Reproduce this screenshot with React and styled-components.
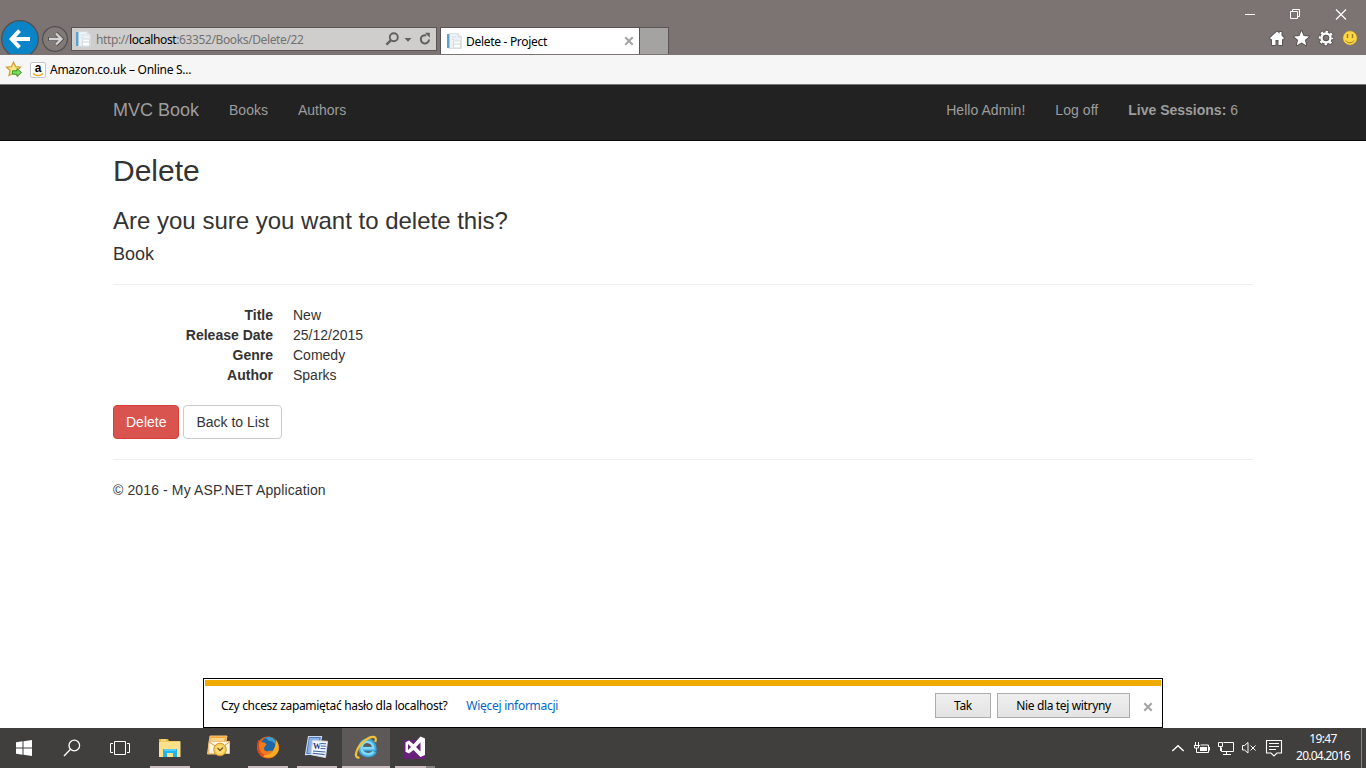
import React from "react";
import styled, { createGlobalStyle } from "styled-components";

const GlobalStyle = createGlobalStyle`
  * { box-sizing: border-box; }
  body { margin: 0; overflow: hidden; background: #fff; }
`;

const Screen = styled.div`
  width: 1366px;
  height: 768px;
  display: flex;
  flex-direction: column;
  overflow: hidden;
  background: #fff;
  font-family: "Liberation Sans", Arial, sans-serif;
`;

const UiText = styled.span`
  font-family: "Noto Sans", "Open Sans", sans-serif;
  font-size: 12px;
  line-height: 16px;
  letter-spacing: ${(p) => p.$spacing || 0}px;
  color: ${(p) => p.$color || "#000"};
  white-space: nowrap;
`;

/* Browser frame */
const Chrome = styled.header`
  height: 55px;
  flex: none;
  display: flex;
  background: #7b7473;
`;
const NavButtons = styled.svg`
  width: 71px;
  height: 36px;
  margin-top: 19px;
  flex: none;
`;
const AddressBar = styled.div`
  width: 366px;
  height: 24px;
  margin-top: 27px;
  padding: 0 3px;
  border: 1px solid #5a5554;
  background: #d0cecd;
  display: flex;
  align-items: center;
`;
const Address = styled.div`
  flex: 1;
  padding: 2px 0 0 5px;
  display: flex;
`;
const Tab = styled.div`
  width: 200px;
  height: 28px;
  margin: 27px 0 0 3px;
  padding: 0 5px 0 5px;
  border: 1px solid #5a5554;
  border-bottom-color: #7b7473;
  background: #fff;
  display: flex;
  align-items: center;
`;
const TabTitle = styled.div`
  flex: 1;
  padding: 2px 0 0 4px;
  display: flex;
`;
const NewTab = styled.div`
  width: 29px;
  height: 27px;
  margin-top: 27px;
  border: 1px solid #5a5554;
  border-width: 1px 1px 0 0;
  background: #a5a3a1;
`;
const FrameTools = styled.div`
  margin-left: auto;
  width: 146px;
  display: flex;
  flex-direction: column;
`;
const FavoritesBar = styled.div`
  height: 30px;
  flex: none;
  padding-left: 5px;
  display: flex;
  align-items: center;
  background: #f6f6f6;
  border-bottom: 1px solid #777;
`;
const FavoriteLink = styled.div`
  display: flex;
  align-items: center;
  gap: 4px;
  margin-left: 8px;
`;

/* Web page */
const Navbar = styled.nav`
  height: 56px;
  flex: none;
  display: flex;
  align-items: flex-start;
  padding: 15px 128px 0 113px;
  background: #222;
  border-bottom: 1px solid #080808;
  color: #9d9d9d;
  font-size: 14px;
  line-height: 20px;
`;
const Brand = styled.span`
  font-size: 18px;
  margin-right: 30px;
`;
const NavLinks = styled.div`
  display: flex;
  gap: 30px;
  margin-left: ${(p) => (p.$right ? "auto" : 0)};
`;
const Greeting = styled.span`
  letter-spacing: 0.05px;
`;
const Page = styled.main`
  width: 1140px;
  margin-left: 113px;
  color: #333;
  font-size: 14px;
  line-height: 20px;
`;
const Title = styled.h2`
  margin: 13px 0 10px;
  font-size: 30px;
  line-height: 33px;
  font-weight: 400;
`;
const Question = styled.h3`
  margin: 21px 0 10px;
  font-size: 24px;
  line-height: 26px;
  font-weight: 400;
`;
const Subject = styled.h4`
  margin: 10px 0;
  font-size: 18px;
  line-height: 20px;
  font-weight: 400;
`;
const Rule = styled.hr`
  margin: 20px 0;
  border: 0;
  border-top: 1px solid #eee;
`;
const Details = styled.dl`
  display: grid;
  grid-template-columns: 160px 1fr;
  column-gap: 20px;
  margin: 0 0 20px;
`;
const Term = styled.dt`
  font-weight: 700;
  text-align: right;
`;
const Value = styled.dd`
  margin: 0;
`;
const Actions = styled.div`
  display: flex;
  gap: 4px;
`;
const Button = styled.button`
  height: 34px;
  padding: 0 12px;
  font: inherit;
  border-radius: 4px;
  border: 1px solid ${(p) => (p.$danger ? "#d43f3a" : "#ccc")};
  background: ${(p) => (p.$danger ? "#d9534f" : "#fff")};
  color: ${(p) => (p.$danger ? "#fff" : "#333")};
`;
const Copyright = styled.p`
  margin: 0;
  letter-spacing: 0.12px;
`;

/* Password prompt */
const Prompt = styled.section`
  width: 960px;
  height: 50px;
  margin: auto 0 0 203px;
  padding: 1px;
  flex: none;
  border: 1px solid #000;
  background: #fff;
`;
const PromptStripe = styled.div`
  height: 6px;
  background: #f0ab00;
`;
const PromptRow = styled.div`
  height: 39px;
  padding: 0 8px 0 16px;
  display: flex;
  align-items: center;
`;
const PromptLink = styled.div`
  flex: 1;
  margin-left: 19px;
  display: flex;
`;
const PromptButton = styled.button`
  width: ${(p) => p.$width}px;
  height: 25px;
  margin-right: 6px;
  padding: 0;
  border: 1px solid #acacac;
  background: linear-gradient(#efefef, #e3e3e3);
`;
const PromptClose = styled.div`
  display: flex;
  padding: 2px 0 0 7px;
`;

/* Taskbar */
const Taskbar = styled.footer`
  height: 40px;
  flex: none;
  display: flex;
  background: #403f3e;
`;
const Task = styled.div`
  width: 48px;
  height: 40px;
  margin-left: ${(p) => p.$gap || 0}px;
  display: flex;
  flex-direction: column;
  align-items: center;
  background: ${(p) => (p.$active ? "#5d5959" : "transparent")};
`;
const TaskIcon = styled.svg`
  width: 48px;
  height: 38px;
  flex: none;
`;
const Running = styled.div`
  width: ${(p) => p.$width || 40}px;
  height: 2px;
  background: #c9bcbd;
  border-right: ${(p) => (p.$stacked ? "9px solid #858081" : "0")};
`;
const Tray = styled.div`
  margin-left: auto;
  display: flex;
`;
const Clock = styled.div`
  width: 76px;
  padding: 3px 0 0;
  display: flex;
  flex-direction: column;
  align-items: center;
  gap: 1px;
`;
const ShowDesktop = styled.div`
  width: 5px;
  border-left: 1px solid #858381;
`;

const PageIcon = () => (
  <svg width="16" height="16" viewBox="0 0 16 16">
    <path d="M3 .5h9l3.500 3.500V15.500H3z" fill="#edf1f5" stroke="#cfd6dc" strokeWidth=".7" />
    <path d="M1 1h3v14H1z" fill="#5d9fd0" />
    <path d="M3 1h1v14H3z" fill="#a5cbe8" />
    <path d="M12 .5V4h3.500M6 4h4M6 6.500h2" fill="none" stroke="#d3dce5" />
    <path d="M7.500 8h7v7h-7z" fill="#fff" stroke="#d3d9df" />
    <path d="M8 11h6" stroke="#cbd3da" />
  </svg>
);

const AddressTools = () => (
  <svg width="48" height="20" viewBox="0 0 48 20" fill="none" stroke="#626160">
    <circle cx="8.800" cy="8.300" r="4" strokeWidth="1.900" />
    <path d="M5.800 11.300 1.400 15.700" strokeWidth="2.400" />
    <path d="M19.500 9h7L23 12.700z" fill="#626160" stroke="none" />
    <path d="M41.300 6.500A4.100 4.100 0 1 0 44 10.500" strokeWidth="2" />
    <path d="M40 3.700h4.800v5z" fill="#626160" stroke="none" />
  </svg>
);

const Close = () => (
  <svg width="10" height="10" viewBox="0 0 10 10">
    <path d="M1.300 1.300l7.400 7.400M8.700 1.300l-7.400 7.400" stroke="#a4a4a4" strokeWidth="2.100" />
  </svg>
);

const ToolbarIcons = () => (
  <svg width="146" height="55" viewBox="0 0 146 55">
    <g fill="none" stroke="#fff">
      <path d="M25 14.500h10M70.500 11.500h7v7h-7zM72.500 11.500v-2h7v7h-2" />
      <path d="M116 9.500l10 10M126 9.500l-10 10" strokeWidth="1.200" />
    </g>
    <g stroke="#5b5554" strokeWidth="2" strokeLinejoin="round" fill="#fff" paintOrder="stroke">
      <path d="M57 31.500l2.500 2.300V32h2v3.500L64 38l-1 1.500-1-.8V45h-3.500v-5h-3v5H52v-6.300l-1 .8-1-1.500z" />
      <path d="M81.500 31l2.100 4.900 5.400.5-4.100 3.500 1.300 5.300-4.700-2.800-4.700 2.800 1.300-5.300-4.100-3.500 5.400-.5z" />
    </g>
    <g fill="none">
      <circle cx="106" cy="38" r="4.600" stroke="#5b5554" strokeWidth="4.500" />
      <circle cx="106" cy="38" r="6.500" stroke="#5b5554" strokeWidth="3.500" strokeDasharray="3.400 1.705" strokeDashoffset="1.700" />
      <circle cx="106" cy="38" r="4.500" stroke="#fff" strokeWidth="2.400" />
      <circle cx="106" cy="38" r="6.300" stroke="#fff" strokeWidth="2" strokeDasharray="2.400 2.548" strokeDashoffset="1.200" />
    </g>
    <circle cx="130" cy="38" r="7.200" fill="#ffd843" stroke="#8f7a45" strokeWidth=".6" />
    <path d="M127.500 34v4M132.500 34v4" stroke="#a27a20" strokeWidth="1.500" />
    <path d="M125.800 40.500c2 3 6.400 3 8.400 0" fill="none" stroke="#a27a20" />
  </svg>
);

const BackForward = () => (
  <NavButtons viewBox="0 19 71 36">
    <circle cx="20" cy="39" r="18.300" fill="#0a84c6" stroke="#574f4c" strokeWidth="1.300" />
    <path d="M30 39H12.500M19.500 30.700L11.700 39l7.800 8.300" fill="none" stroke="#fff" strokeWidth="3.900" />
    <circle cx="55" cy="39" r="12.400" fill="#817a79" stroke="#545150" strokeWidth="1.300" />
    <path d="M48 39h12M56 33.200L61.700 39 56 44.800" fill="none" stroke="#555" strokeWidth="4" />
    <path d="M49 39h12M56 33.500L61.500 39 56 44.500" fill="none" stroke="#d6d4d3" strokeWidth="2.300" />
    <path d="M0 54h71v1H0z" fill="#7b7473" />
  </NavButtons>
);

const AddFavorite = () => (
  <svg width="17" height="17" viewBox="0 0 17 17">
    <path d="M8.500 1.200l2.100 4.500 5 .5-3.800 3.300 1.200 5-4.500-2.200L4 14.500l1.200-5L1.400 6.200l5-.5z" fill="#ffe78a" stroke="#d39a2c" strokeWidth="1.200" />
    <path d="M7.500 9.800H12V7.500l4.500 4L12 15.500v-2.300H7.500z" fill="#7ddb5f" stroke="#2f9a25" />
  </svg>
);

const AmazonTile = styled.div`
  width: 16px;
  height: 16px;
  border: 1px solid #c4c4c4;
  border-radius: 2px;
  background: #fff;
  display: grid;
  justify-items: center;
  overflow: hidden;
  font: 700 12px/10px "Liberation Sans", Arial, sans-serif;
`;
const Amazon = () => (
  <AmazonTile>
    <span>a</span>
    <svg width="12" height="4" viewBox="0 0 12 4">
      <path d="M1 .5c3 2.700 7 2.700 10 0" fill="none" stroke="#f5a51b" strokeWidth="1.500" />
    </svg>
  </AmazonTile>
);

const WindowsIcon = () => (
  <TaskIcon>
    <path d="M16 14.200l6.500-.9v6.200H16zM23.500 13.200L32 12v7.500h-8.500zM16 20.500h6.500v6.200l-6.500-.9zM23.500 20.500H32V28l-8.500-1.200z" fill="#fff" />
  </TaskIcon>
);
const SearchIcon = () => (
  <TaskIcon fill="none" stroke="#fff" strokeWidth="1.300">
    <circle cx="26.300" cy="17.500" r="5.300" />
    <path d="M22.500 21.300L16 28" />
  </TaskIcon>
);
const TaskViewIcon = () => (
  <TaskIcon fill="none" stroke="#fff">
    <path d="M18.500 13.500h11v13h-11zM17 15.500h-2.500v9H17M31 15.500h2.500v9H31" />
  </TaskIcon>
);
const ExplorerIcon = () => (
  <TaskIcon>
    <path d="M13 11h9l1 2h11v16H13z" fill="#e9b53a" />
    <path d="M14 13.500h20.500V29H13V15z" fill="#ffe08a" />
    <path d="M15 12h5" stroke="#fff6c4" />
    <path d="M17 29v-8h14v8h-4v-4h-6v4z" fill="#1fb6f0" />
    <path d="M18 21h12v2H18z" fill="#53cdf5" />
  </TaskIcon>
);
const OutlookIcon = () => (
  <TaskIcon>
    <path d="M15 8h17l-1 5-3 13H12.500z" fill="#f3a93d" stroke="#f9c777" />
    <path d="M16 10h14l-1 3H15z" fill="#fbd48c" />
    <path d="M14 13.500h20.500v12H14z" fill="#fff6e6" stroke="#f2c27c" />
    <path d="M14 14l11 7 9.500-7" fill="none" stroke="#d99a3e" />
    <circle cx="25" cy="21.500" r="6.300" fill="#f7cd5a" stroke="#d8942a" />
    <circle cx="25" cy="21.500" r="4.200" fill="#fddf7b" />
    <path d="M22.500 20l2.500 2.500 3-3" fill="none" stroke="#7e5a1a" strokeWidth="1.500" />
  </TaskIcon>
);
const FirefoxIcon = () => (
  <TaskIcon>
    <circle cx="24" cy="19.500" r="10.900" fill="#e8641b" />
    <circle cx="25" cy="16.500" r="7.800" fill="#1f66a5" />
    <path d="M21 10c6-3 11 1 11 7-2-2-3-4-6-4-2 0-2-2-5-3z" fill="#3f9fd2" />
    <path d="M14.500 12l3 2.500c3-1 4 .5 5 2l-2 2.500c-1.500 3 1 5 4 4 2-.5 3 0 4 0-2 4-7 5-10 2-4 0-6-5-4-13z" fill="#f07c1e" />
    <path d="M32 12c4.500 6 3.500 13-2 16.200-5 2.800-10.500 1-13-1.700 7 3 14.500-2 15-14.500z" fill="#fbab22" />
    <path d="M14.800 13c-2 6-.3 12 4.700 15" fill="none" stroke="#d84720" strokeWidth="2" />
  </TaskIcon>
);
const WordLetter = styled.text`
  font: 700 8px "Liberation Serif", serif;
  fill: #1d3f86;
`;
const WordIcon = () => (
  <TaskIcon>
    <path d="M15.500 8.500h13l-3 17.500-13 .5z" fill="#4e78bd" stroke="#c8d9f2" strokeWidth="1.200" />
    <path d="M16.500 10h10l-.5 3h-6l-2 12h-3.500z" fill="#91b2e0" />
    <path d="M19.700 12.500l14.800.8-2 16.200-14.500-2.800z" fill="#f5f8fd" stroke="#cbd8eb" />
    <WordLetter x="20" y="21">W</WordLetter>
    <path d="M28 15.500l5 .3M27.800 18l5 .3M27.500 20.500l5 .3M20 23l12.300 1M19.700 25.200l12 1.400" stroke="#3d63a8" strokeWidth="1.100" />
  </TaskIcon>
);
const InternetExplorerIcon = () => (
  <TaskIcon>
    <path d="M32.500 23.500c-2 5.200-13.800 5-13.800-3.500 0-10 13.600-9.500 13.600 1H21" fill="none" stroke="#39a8df" strokeWidth="4.600" />
    <path d="M31.500 23.500c-2 4-12 4-12-3.500 0-8.500 11.500-8 12 .3H21" fill="none" stroke="#82dafa" strokeWidth="2.400" />
    <path d="M17.500 29.500c-7 1.500-3-11 6-17.500 6-4.500 12.500-4.500 9.700 2" fill="none" stroke="#f0c237" strokeWidth="2.200" />
  </TaskIcon>
);
const VisualStudioIcon = () => (
  <TaskIcon>
    <path d="M13 12h15v-2h7v21H13z" fill="#68217a" />
    <path d="M29.500 8.500l4.500 2v16.500l-4.500 2-7-7-4.500 3.500-3.500-1.700v-9.600L18 12.500l4.500 3.700zm0 6L25 19l4.500 4.500zM17 16v6l3-3z" fill="#fff" fillRule="evenodd" />
  </TaskIcon>
);

const TrayIcons = () => (
  <svg width="115" height="40" viewBox="1170 728 115 40" fill="none" stroke="#fff">
    <path d="M1172.300 751l5.700-5.300 5.700 5.300" strokeWidth="1.400" />
    <path d="M1195.500 742v3M1198.500 742v3M1194 745.500h6M1194.500 745.500v2.500h4v-2M1196.500 748v4.500h12v-7.500h-8M1209.500 747v3.500" />
    <path d="M1200 747h7v4h-7z" fill="#fff" stroke="none" />
    <path d="M1223.500 742.500h10v9h-12v-4M1218.500 742.500h4v4h-4zM1220.500 747v4M1226.500 752v3M1223 754.500h8" />
    <path d="M1242.500 745.500h2l3.500-3v10.500l-3.500-3h-2zM1250.500 745.500l5 5M1255.500 745.500l-5 5" />
    <path d="M1266.500 740.500h15v12.500h-4.500l-3 3-3-3h-4.500zM1269 743.500h10M1269 746.500h10M1269 749.500h7" strokeWidth="1.100" />
  </svg>
);

const details = [
  ["Title", "New"],
  ["Release Date", "25/12/2015"],
  ["Genre", "Comedy"],
  ["Author", "Sparks"],
];

export default function App() {
  return (
    <Screen>
      <GlobalStyle />
      <Chrome>
        <BackForward />
        <AddressBar>
          <PageIcon />
          <Address>
            <UiText $color="#737170" $spacing={-0.38}>
              http://<UiText $spacing={-0.38}>localhost</UiText>:63352/Books/Delete/22
            </UiText>
          </Address>
          <AddressTools />
        </AddressBar>
        <Tab>
          <PageIcon />
          <TabTitle><UiText $spacing={-0.3}>Delete - Project</UiText></TabTitle>
          <Close />
        </Tab>
        <NewTab />
        <FrameTools><ToolbarIcons /></FrameTools>
      </Chrome>
      <FavoritesBar>
        <AddFavorite />
        <FavoriteLink>
          <Amazon />
          <UiText $spacing={-0.26}>Amazon.co.uk – Online S...</UiText>
        </FavoriteLink>
      </FavoritesBar>
      <Navbar>
        <Brand>MVC Book</Brand>
        <NavLinks><span>Books</span><span>Authors</span></NavLinks>
        <NavLinks $right>
          <Greeting>Hello Admin!</Greeting>
          <Greeting>Log off</Greeting>
          <span><b>Live Sessions:</b> 6</span>
        </NavLinks>
      </Navbar>
      <Page>
        <Title>Delete</Title>
        <Question>Are you sure you want to delete this?</Question>
        <Subject>Book</Subject>
        <Rule />
        <Details>
          {details.map(([term, value]) => (
            <React.Fragment key={term}>
              <Term>{term}</Term>
              <Value>{value}</Value>
            </React.Fragment>
          ))}
        </Details>
        <Actions>
          <Button $danger>Delete</Button>
          <Button>Back to List</Button>
        </Actions>
        <Rule />
        <Copyright>© 2016 - My ASP.NET Application</Copyright>
      </Page>
      <Prompt>
        <PromptStripe />
        <PromptRow>
          <UiText $spacing={-0.32}>Czy chcesz zapamiętać hasło dla localhost?</UiText>
          <PromptLink><UiText $color="#0066cc" $spacing={-0.28}>Więcej informacji</UiText></PromptLink>
          <PromptButton $width={56}><UiText $spacing={-0.3}>Tak</UiText></PromptButton>
          <PromptButton $width={133}><UiText $spacing={-0.35}>Nie dla tej witryny</UiText></PromptButton>
          <PromptClose><Close /></PromptClose>
        </PromptRow>
      </Prompt>
      <Taskbar>
        <Task><WindowsIcon /></Task>
        <Task><SearchIcon /></Task>
        <Task><TaskViewIcon /></Task>
        <Task $gap={2}><ExplorerIcon /><Running /></Task>
        <Task $gap={1}><OutlookIcon /></Task>
        <Task $gap={1}><FirefoxIcon /><Running /></Task>
        <Task $gap={1}><WordIcon /><Running /></Task>
        <Task $gap={1} $active><InternetExplorerIcon /><Running $width={48} /></Task>
        <Task $gap={1}><VisualStudioIcon /><Running $stacked /></Task>
        <Tray>
          <TrayIcons />
          <Clock>
            <UiText $color="#fff" $spacing={-0.65}>19:47</UiText>
            <UiText $color="#fff" $spacing={-0.75}>20.04.2016</UiText>
          </Clock>
          <ShowDesktop />
        </Tray>
      </Taskbar>
    </Screen>
  );
}
